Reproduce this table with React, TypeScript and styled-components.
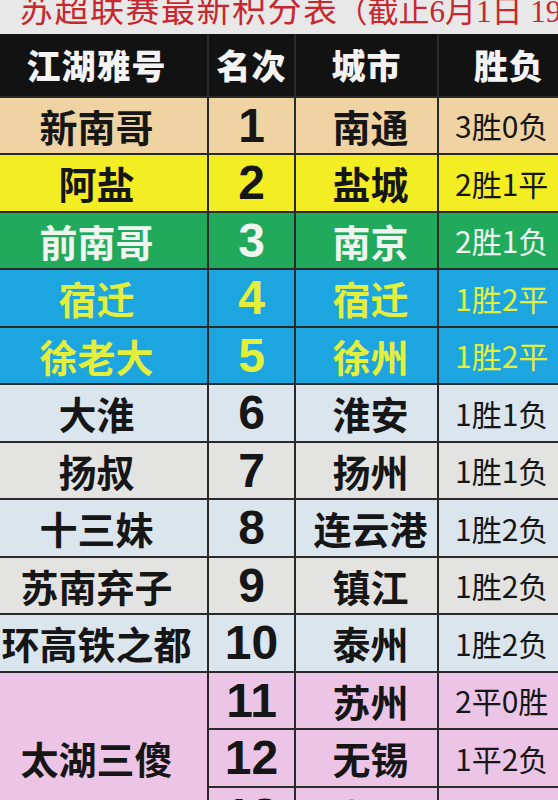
import React from 'react';
import styled, { createGlobalStyle } from 'styled-components';

const GlobalStyle = createGlobalStyle`
  html, body {
    margin: 0;
    padding: 0;
    background: #e8e8e8;
    overflow: hidden;
  }
  body {
    width: 558px;
    height: 800px;
  }
`;

const colors = {
  tan: '#efd3a3',
  yellow: '#f3ee24',
  green: '#21aa5c',
  blue: '#1ca5de',
  grayBlue: '#dbe5ee',
  gray: '#e3e3e1',
  pink: '#ecc5e6',
  ink: '#161616',
  white: '#eef6ef',
  lemon: '#e4ef3c',
  line: '#2a2a2a',
};

type Row = {
  name?: string;
  nameSpan?: number;
  rank: number;
  city: string;
  record: string;
  bg: string;
  fg: string;
};

const rows: Row[] = [
  { name: '新南哥', rank: 1, city: '南通', record: '3胜0负', bg: colors.tan, fg: colors.ink },
  { name: '阿盐', rank: 2, city: '盐城', record: '2胜1平', bg: colors.yellow, fg: colors.ink },
  { name: '前南哥', rank: 3, city: '南京', record: '2胜1负', bg: colors.green, fg: colors.white },
  { name: '宿迁', rank: 4, city: '宿迁', record: '1胜2平', bg: colors.blue, fg: colors.lemon },
  { name: '徐老大', rank: 5, city: '徐州', record: '1胜2平', bg: colors.blue, fg: colors.lemon },
  { name: '大淮', rank: 6, city: '淮安', record: '1胜1负', bg: colors.grayBlue, fg: colors.ink },
  { name: '扬叔', rank: 7, city: '扬州', record: '1胜1负', bg: colors.gray, fg: colors.ink },
  { name: '十三妹', rank: 8, city: '连云港', record: '1胜2负', bg: colors.grayBlue, fg: colors.ink },
  { name: '苏南弃子', rank: 9, city: '镇江', record: '1胜2负', bg: colors.gray, fg: colors.ink },
  { name: '环高铁之都', rank: 10, city: '泰州', record: '1胜2负', bg: colors.grayBlue, fg: colors.ink },
  { name: '太湖三傻', nameSpan: 3, rank: 11, city: '苏州', record: '2平0胜', bg: colors.pink, fg: colors.ink },
  { rank: 12, city: '无锡', record: '1平2负', bg: colors.pink, fg: colors.ink },
  { rank: 13, city: '常州', record: '0胜3负', bg: colors.pink, fg: colors.ink },
];

const App = () => {
  return (
    <>
      <GlobalStyle />
      <Page>
        <TitleBar>
          <Title>
            苏超联赛最新积分表
            <TitleNote>（截止6月1日 19:00）</TitleNote>
          </Title>
        </TitleBar>
        <Table>
          <HeadCell $shift={14}>江湖雅号</HeadCell>
          <HeadCell>名次</HeadCell>
          <HeadCell>城市</HeadCell>
          <HeadCell $shift={-10}>胜负</HeadCell>
          {rows.map((r) => (
            <React.Fragment key={r.rank}>
              {r.name && (
                <NameCell $bg={r.bg} $fg={r.fg} $span={r.nameSpan || 1}>
                  {r.name}
                </NameCell>
              )}
              <RankCell $bg={r.bg} $fg={r.fg}>{r.rank}</RankCell>
              <CityCell $bg={r.bg} $fg={r.fg}>{r.city}</CityCell>
              <RecordCell $bg={r.bg} $fg={r.fg}>{r.record}</RecordCell>
            </React.Fragment>
          ))}
        </Table>
      </Page>
    </>
  );
};

export default App;

const Page = styled.div`
  width: 558px;
  height: 800px;
  overflow: hidden;
  background: #e8e8e8;
`;

const TitleBar = styled.div`
  height: 34px;
  overflow: hidden;
  padding-left: 19px;
  white-space: nowrap;
`;

const Title = styled.div`
  margin-top: -9px;
  font-family: 'Liberation Serif', 'Noto Sans CJK SC', serif;
  font-size: 34px;
  line-height: 40px;
  letter-spacing: 1.5px;
  color: #c7272f;
`;

const TitleNote = styled.span`
  margin-left: -2px;
  font-size: 31px;
  letter-spacing: 0;
`;

const Table = styled.div`
  display: grid;
  grid-template-columns: 207px 85px 141px 130px;
  grid-template-rows: 61.5px;
  grid-auto-rows: 55.5px;
  gap: 2px;
  background: ${colors.line};
  width: 569px;
`;

const HeadCell = styled.div<{ $shift?: number }>`
  display: flex;
  align-items: center;
  justify-content: center;
  padding-right: ${(p) => (p.$shift && p.$shift > 0 ? p.$shift : 0)}px;
  padding-left: ${(p) => (p.$shift && p.$shift < 0 ? -p.$shift : 0)}px;
  background: #121212;
  color: #f3f3f3;
  font-family: 'Noto Sans CJK SC', sans-serif;
  font-weight: 900;
  font-size: 34px;
  letter-spacing: 1px;
`;

const Cell = styled.div<{ $bg: string; $fg: string }>`
  display: flex;
  align-items: center;
  justify-content: center;
  background: ${(p) => p.$bg};
  color: ${(p) => p.$fg};
  white-space: nowrap;
  overflow: hidden;
`;

const NameCell = styled(Cell)<{ $span: number }>`
  grid-row: span ${(p) => p.$span};
  padding-right: 14px;
  font-family: 'Noto Sans CJK SC', sans-serif;
  font-weight: 700;
  font-size: 38px;
  overflow: visible;
`;

const RankCell = styled(Cell)`
  font-family: 'Liberation Sans', Arial, sans-serif;
  font-weight: 700;
  font-size: 48px;
`;

const CityCell = styled(Cell)`
  padding-left: 8px;
  font-family: 'Noto Sans CJK SC', sans-serif;
  font-weight: 700;
  font-size: 38px;
`;

const RecordCell = styled(Cell)`
  justify-content: flex-start;
  padding-left: 16px;
  font-family: 'Noto Sans CJK SC', sans-serif;
  font-weight: 400;
  font-size: 30px;
`;
